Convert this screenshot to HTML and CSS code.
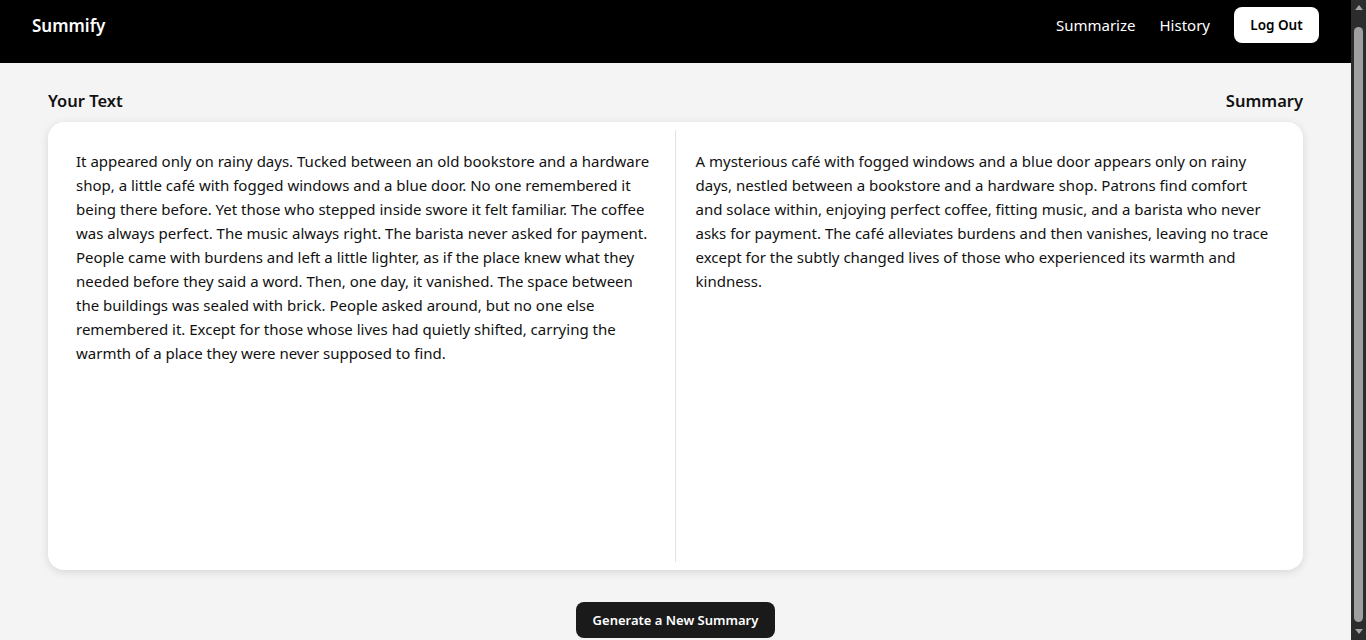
FILE: index.html
```html
<!DOCTYPE html>
<html lang="en">
<head>
<meta charset="utf-8">
<title>Summify</title>
<link rel="stylesheet" href="styles.css">
</head>
<body>
<header class="navbar">
  <div class="brand">Summify</div>
  <nav class="nav">
    <a class="nav-link" href="#">Summarize</a>
    <a class="nav-link" href="#">History</a>
    <button class="logout">Log Out</button>
  </nav>
</header>
<main class="main">
  <div class="labels">
    <h2 class="label">Your Text</h2>
    <h2 class="label">Summary</h2>
  </div>
  <section class="card">
    <div class="pane pane-left">
      <p>It appeared only on rainy days. Tucked between an old bookstore and a hardware shop, a little café with fogged windows and a blue door. No one remembered it being there before. Yet those who stepped inside swore it felt familiar. The coffee was always perfect. The music always right. The barista never asked for payment. People came with burdens and left a little lighter, as if the place knew what they needed before they said a word. Then, one day, it vanished. The space between the buildings was sealed with brick. People asked around, but no one else remembered it. Except for those whose lives had quietly shifted, carrying the warmth of a place they were never supposed to find.</p>
    </div>
    <div class="pane pane-right">
      <p>A mysterious café with fogged windows and a blue door appears only on rainy days, nestled between a bookstore and a hardware shop. Patrons find comfort and solace within, enjoying perfect coffee, fitting music, and a barista who never asks for payment. The café alleviates burdens and then vanishes, leaving no trace except for the subtly changed lives of those who experienced its warmth and kindness.</p>
    </div>
  </section>
  <div class="actions">
    <button class="generate">Generate a New Summary</button>
  </div>
</main>
<div class="scrollbar" aria-hidden="true">
  <span class="sb-arrow sb-up"></span>
  <span class="sb-thumb"></span>
  <span class="sb-arrow sb-down"></span>
</div>
</body>
</html>
```
FILE: styles.css
```css
html {
  background: #f4f4f4;
}
body {
  margin: 0;
  padding-right: 15px;
  background: #f4f4f4;
  color: #111;
  font-family: "Noto Sans", "Open Sans", sans-serif;
}
.navbar {
  height: 63px;
  background: #000;
  display: flex;
  align-items: center;
  justify-content: space-between;
  padding: 0 32px;
  box-sizing: border-box;
}
.brand {
  color: #fff;
  font-weight: 600;
  font-size: 17px;
  margin-top: -13px;
}
.nav {
  display: flex;
  align-items: center;
  gap: 24px;
  margin-top: -13px;
}
.nav-link {
  color: #fff;
  text-decoration: none;
  font-size: 15px;
}
.logout {
  background: #fff;
  color: #000;
  border: none;
  border-radius: 8px;
  height: 36px;
  width: 85px;
  font-family: inherit;
  font-weight: 600;
  font-size: 13.5px;
}
.main {
  padding: 15px 48px 15px;
}
.labels {
  display: flex;
  justify-content: space-between;
  height: 44px;
  align-items: center;
}
.label {
  margin: 0;
  font-size: 16.5px;
  font-weight: 600;
  color: #111;
}
.card {
  background: #fff;
  border-radius: 16px;
  box-shadow: 0 2px 8px rgba(0,0,0,0.12);
  height: 448px;
  box-sizing: border-box;
  padding: 8px;
  display: grid;
  grid-template-columns: 1fr 1fr;
}
.pane {
  padding: 19px 20px;
  font-size: 15px;
  line-height: 24px;
  color: #111;
}
.pane p {
  margin: 0;
}
.pane-left {
  border-right: 1px solid #e2e2e2;
}
.actions {
  display: flex;
  justify-content: center;
  margin-top: 32px;
}
.generate {
  background: #1a1a1a;
  color: #fff;
  border: none;
  border-radius: 8px;
  height: 36px;
  width: 199px;
  font-family: inherit;
  font-weight: 600;
  font-size: 13px;
}
.scrollbar {
  position: fixed;
  top: 0;
  right: 0;
  bottom: 0;
  width: 15px;
  background: #2c2c2c;
  display: flex;
  flex-direction: column;
  align-items: center;
}
.sb-arrow {
  width: 0;
  height: 0;
  border-left: 4px solid transparent;
  border-right: 4px solid transparent;
}
.sb-up {
  margin-top: 5px;
  border-bottom: 5px solid #a3a3a3;
}
.sb-down {
  margin-bottom: 6px;
  border-top: 5px solid #a3a3a3;
}
.sb-thumb {
  flex: 1;
  width: 9px;
  margin: 17px 0 7px;
  border-radius: 5px;
  background: #9f9f9f;
}
```
